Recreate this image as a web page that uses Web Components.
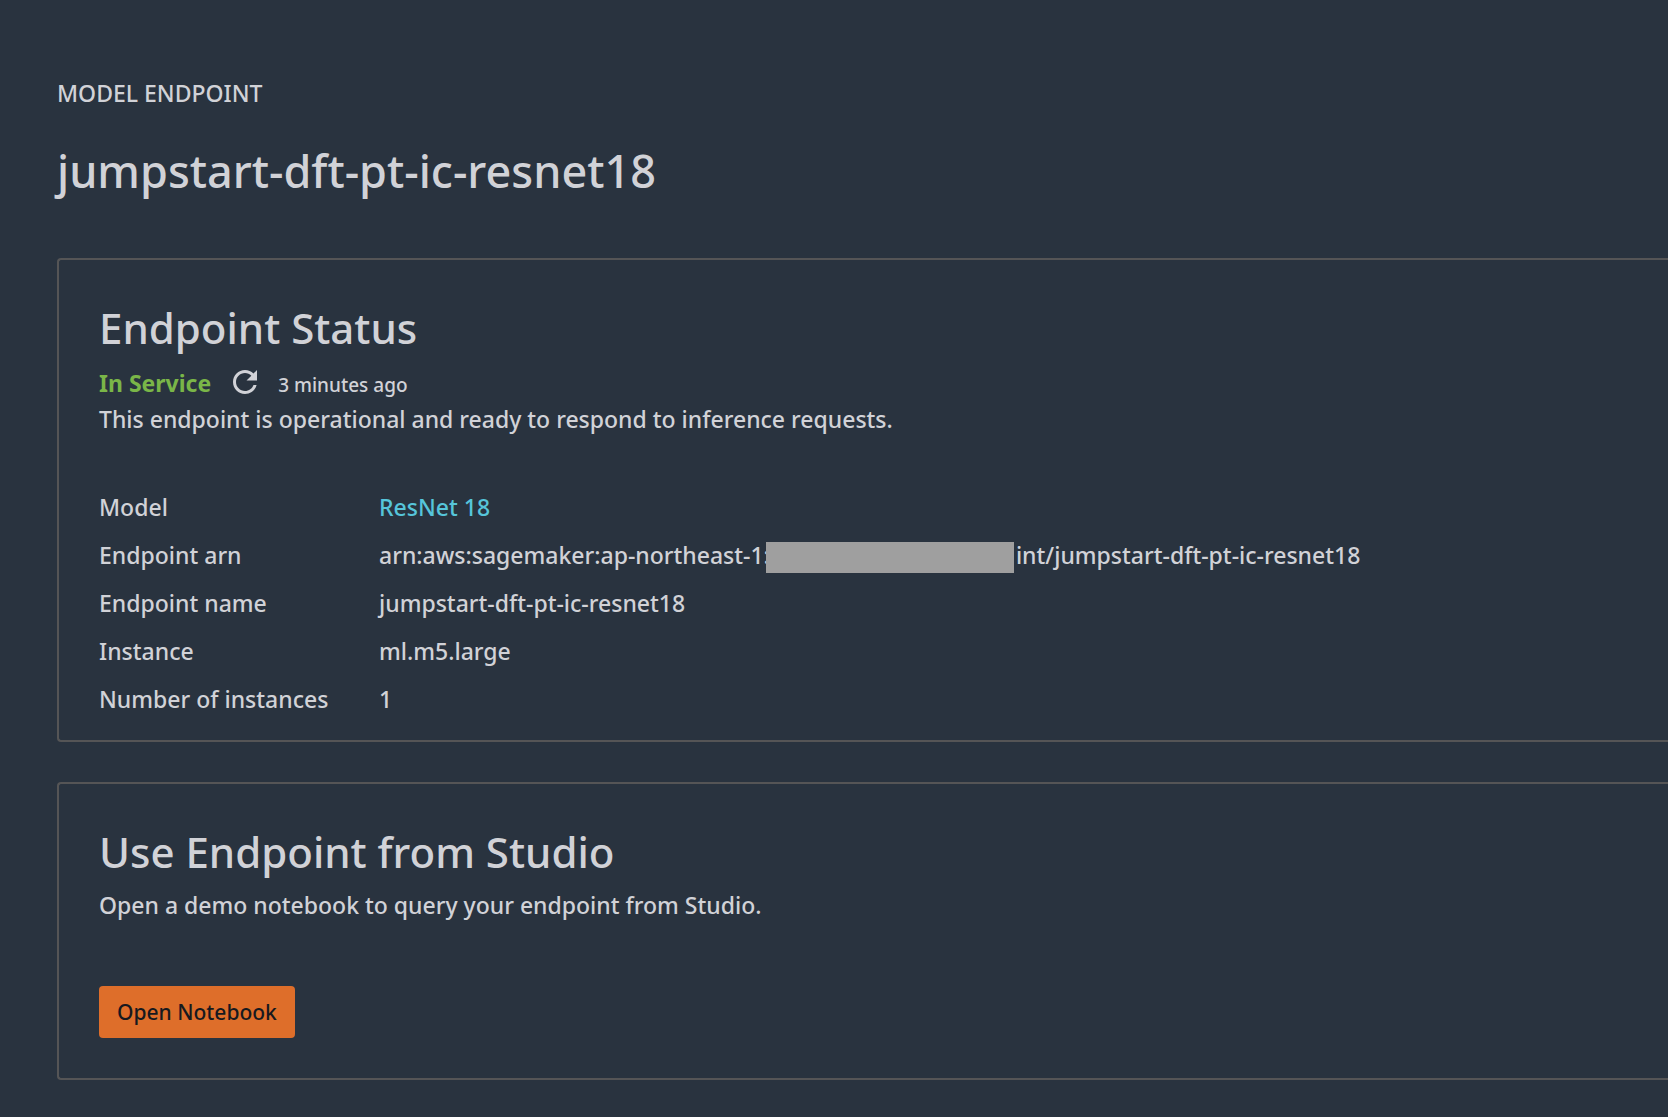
<!DOCTYPE html>
<html lang="en">
<head>
<meta charset="utf-8">
<title>Model endpoint</title>
<style>
html { background: #29333f; }
body { margin: 0; color: #d1d2d7; font: 500 23px/36px "Noto Sans", "Open Sans", sans-serif; }
</style>
</head>
<body>
<endpoint-page></endpoint-page>
<script>
class EndpointPage extends HTMLElement {
  constructor() {
    super();
    this.attachShadow({ mode: "open" }).innerHTML = `
      <style>
        :host { display: block; padding: 77px 0 37px 57px; }
        main { display: flex; flex-direction: column; gap: 40px; }
        p { margin: 0; }
        a { color: #56c5da; text-decoration: none; }
        .details { margin-top: 46px; }
      </style>
      <page-header kicker="MODEL ENDPOINT">jumpstart-dft-pt-ic-resnet18</page-header>
      <main>
        <info-card heading="Endpoint Status">
          <endpoint-status state="In Service" updated="3 minutes ago"></endpoint-status>
          <p>This endpoint is operational and ready to respond to inference requests.</p>
          <div class="details">
            <detail-row label="Model"><a href="#model">ResNet 18</a></detail-row>
            <detail-row label="Endpoint arn"><redacted-text before="arn:aws:sagemaker:ap-northeast-1:" after="int/jumpstart-dft-pt-ic-resnet18"></redacted-text></detail-row>
            <detail-row label="Endpoint name">jumpstart-dft-pt-ic-resnet18</detail-row>
            <detail-row label="Instance">ml.m5.large</detail-row>
            <detail-row label="Number of instances">1</detail-row>
          </div>
        </info-card>
        <info-card class="action" heading="Use Endpoint from Studio">
          <p>Open a demo notebook to query your endpoint from Studio.</p>
          <primary-button>Open Notebook</primary-button>
        </info-card>
      </main>`;
  }
}
class PageHeader extends HTMLElement {
  constructor() {
    super();
    this.attachShadow({ mode: "open" }).innerHTML = `
      <style>
        :host { display: block; margin-bottom: 59px; }
        p { margin: 0 0 34px; line-height: 32px; }
        h1 { margin: 0; font-size: 45px; line-height: 56px; font-weight: 500; }
      </style>
      <p></p><h1><slot></slot></h1>`;
  }
  connectedCallback() { this.shadowRoot.querySelector("p").textContent = this.getAttribute("kicker"); }
}
class InfoCard extends HTMLElement {
  constructor() {
    super();
    this.attachShadow({ mode: "open" }).innerHTML = `
      <style>
        :host { display: block; border: 2px solid #555556; border-right: 0; border-radius: 4px 0 0 4px; padding: 41px 40px 17px; }
        :host(.action) { padding-bottom: 40px; }
        h2 { margin: 0 0 8px; font-size: 42px; line-height: 54px; font-weight: 500; }
      </style>
      <h2></h2><slot></slot>`;
  }
  connectedCallback() { this.shadowRoot.querySelector("h2").textContent = this.getAttribute("heading"); }
}
class EndpointStatus extends HTMLElement {
  constructor() {
    super();
    this.attachShadow({ mode: "open" }).innerHTML = `
      <style>
        :host { display: flex; align-items: baseline; height: 38px; line-height: 40px; }
        strong { color: #7ab648; font-weight: 700; }
        button { display: flex; align-self: center; margin: 0 15px 0 16px; padding: 0; border: 0; background: none; color: inherit; }
        svg { width: 36px; height: 36px; fill: currentColor; }
        span { font-size: 19px; }
      </style>
      <strong></strong>
      <button type="button" aria-label="Refresh"><svg viewBox="0 0 24 24" aria-hidden="true"><path d="M17.65 6.35C16.2 4.9 14.21 4 12 4c-4.42 0-7.99 3.58-7.99 8s3.57 8 7.99 8c3.73 0 6.84-2.55 7.73-6h-2.08c-.82 2.33-3.04 4-5.65 4-3.31 0-6-2.69-6-6s2.69-6 6-6c1.66 0 3.14.69 4.22 1.78L13 11h7V4l-2.35 2.35z"/></svg></button>
      <span></span>`;
  }
  connectedCallback() {
    this.shadowRoot.querySelector("strong").textContent = this.getAttribute("state");
    this.shadowRoot.querySelector("span").textContent = this.getAttribute("updated");
  }
}
class DetailRow extends HTMLElement {
  constructor() {
    super();
    this.attachShadow({ mode: "open" }).innerHTML = `
      <style>
        :host { display: grid; grid-template-columns: 280px 1fr; line-height: 48px; }
      </style>
      <span></span><div><slot></slot></div>`;
  }
  connectedCallback() { this.shadowRoot.querySelector("span").textContent = this.getAttribute("label"); }
}
class RedactedText extends HTMLElement {
  constructor() {
    super();
    this.attachShadow({ mode: "open" }).innerHTML = `
      <style>
        :host { display: flex; align-items: center; white-space: nowrap; }
        i { z-index: 1; width: 248px; height: 31px; margin: 5px 2px 0 -4px; background: #9f9f9f; }
      </style>
      <span class="before"></span><i></i><span class="after"></span>`;
  }
  connectedCallback() {
    this.shadowRoot.querySelector(".before").textContent = this.getAttribute("before");
    this.shadowRoot.querySelector(".after").textContent = this.getAttribute("after");
  }
}
class PrimaryButton extends HTMLElement {
  constructor() {
    super();
    this.attachShadow({ mode: "open" }).innerHTML = `
      <style>
        :host { display: block; margin-top: 63px; }
        button { display: block; height: 52px; padding: 0 18px; border: 0; border-radius: 4px; background: #de6e2a; color: #16191f; font: inherit; font-size: 21px; }
      </style>
      <button type="button"><slot></slot></button>`;
  }
}
customElements.define("page-header", PageHeader);
customElements.define("info-card", InfoCard);
customElements.define("endpoint-status", EndpointStatus);
customElements.define("detail-row", DetailRow);
customElements.define("redacted-text", RedactedText);
customElements.define("primary-button", PrimaryButton);
customElements.define("endpoint-page", EndpointPage);
</script>
</body>
</html>
